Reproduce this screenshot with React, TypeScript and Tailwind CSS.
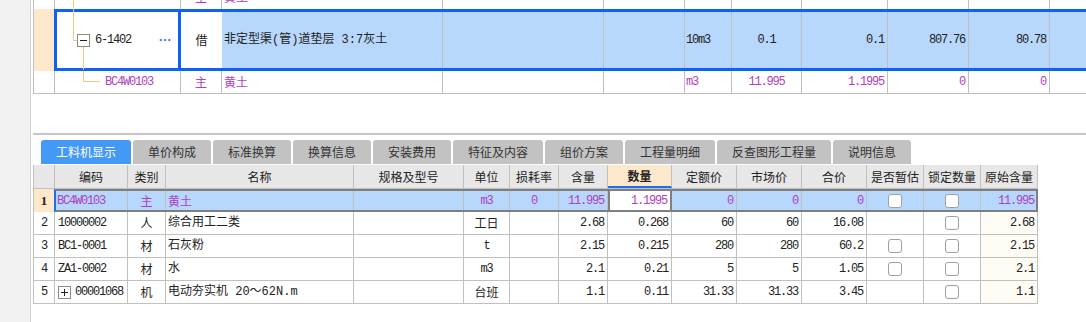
import React from "react";

const MONO = "font-['Liberation_Mono','Noto_Sans_CJK_SC',monospace] text-[12px] tracking-[-1.2px]";
const CJK = "font-['Noto_Sans_CJK_SC',sans-serif] text-[12px]";
const MIX = "font-['Liberation_Mono','Noto_Sans_CJK_SC',monospace] text-[12px]";

const PURPLE = "text-[#b040c0]";

type Row = {
	no: string;
	code: string;
	cat: string;
	name: string;
	unit: string;
	loss: string;
	content: string;
	qty: string;
	dprice: string;
	mprice: string;
	total: string;
	est: boolean;
	orig: string;
	expand?: boolean;
};

const ROWS: Row[] = [
	{ no: "2", code: "10000002", cat: "人", name: "综合用工二类", unit: "工日", loss: "", content: "2.68", qty: "0.268", dprice: "60", mprice: "60", total: "16.08", est: false, orig: "2.68" },
	{ no: "3", code: "BC1-0001", cat: "材", name: "石灰粉", unit: "t", loss: "", content: "2.15", qty: "0.215", dprice: "280", mprice: "280", total: "60.2", est: true, orig: "2.15" },
	{ no: "4", code: "ZA1-0002", cat: "材", name: "水", unit: "m3", loss: "", content: "2.1", qty: "0.21", dprice: "5", mprice: "5", total: "1.05", est: true, orig: "2.1" },
	{ no: "5", code: "00001068", cat: "机", name: "电动夯实机 20～62N.m", unit: "台班", loss: "", content: "1.1", qty: "0.11", dprice: "31.33", mprice: "31.33", total: "3.45", est: false, orig: "1.1", expand: true },
];

const TABS = [
	{ label: "工料机显示", w: "w-[90px]" },
	{ label: "单价构成", w: "w-[78px]" },
	{ label: "标准换算", w: "w-[78px]" },
	{ label: "换算信息", w: "w-[78px]" },
	{ label: "安装费用", w: "w-[78px]" },
	{ label: "特征及内容", w: "w-[90px]" },
	{ label: "组价方案", w: "w-[78px]" },
	{ label: "工程量明细", w: "w-[90px]" },
	{ label: "反查图形工程量", w: "w-[114px]" },
	{ label: "说明信息", w: "w-[78px]" },
];

const HEAD = [
	{ label: "编码", w: "w-[73px]" },
	{ label: "类别", w: "w-[38px]" },
	{ label: "名称", w: "w-[188px]" },
	{ label: "规格及型号", w: "w-[110px]" },
	{ label: "单位", w: "w-[46px]" },
	{ label: "损耗率", w: "w-[49px]" },
	{ label: "含量", w: "w-[49px]" },
	{ label: "数量", w: "w-[64px]" },
	{ label: "定额价", w: "w-[65px]" },
	{ label: "市场价", w: "w-[65px]" },
	{ label: "合价", w: "w-[65px]" },
	{ label: "是否暂估", w: "w-[57px]" },
	{ label: "锁定数量", w: "w-[57px]" },
	{ label: "原始含量", w: "w-[57px]" },
];

function Check() {
	return <span className="block h-[14px] w-[14px] rounded-[3px] border border-[#a0a0a0] bg-white" />;
}

function TreeBox({ sign }: { sign: "-" | "+" }) {
	return (
		<span className="relative flex h-[13px] w-[13px] shrink-0 items-center justify-center border border-[#8a8a8a] bg-white">
			<span className="h-px w-[7px] bg-[#222]" />
			{sign === "+" && <span className="absolute h-[7px] w-px bg-[#222]" />}
		</span>
	);
}

function TopGrid() {
	const line = "border-r border-[#c0c0c0]";
	return (
		<div className="border-l border-[#c0c0c0] text-[#222]">
			{/* previous row, cut off at the top */}
			<div className="h-[9px] overflow-hidden">
				<div className="-mt-[16px] flex h-[25px]">
					<div className={`w-[21px] ${line}`} />
					<div className={`relative flex w-[126px] items-center pl-[50px] ${line} ${MONO} ${PURPLE}`}>
						<span className="absolute left-[18px] top-0 h-full w-px bg-[#f5c48a]" />
						BC4W0103
					</div>
					<div className={`flex w-[41px] items-center justify-center ${line} ${CJK} ${PURPLE}`}>主</div>
					<div className={`flex w-[221px] items-center pl-[2px] ${line} ${CJK} ${PURPLE}`}>黄土</div>
					<div className={`w-[161px] ${line}`} />
					<div className={`w-[81px] ${line}`} />
					<div className={`flex w-[47px] items-center pl-[1px] ${line} ${MONO} ${PURPLE}`}>m3</div>
					<div className={`flex w-[70px] items-center justify-center ${line} ${MONO} ${PURPLE}`}>11.995</div>
					<div className={`flex w-[86px] items-center justify-end pr-[3px] ${line} ${MONO} ${PURPLE}`}>1.1995</div>
					<div className={`flex w-[81px] items-center justify-end pr-[3px] ${line} ${MONO} ${PURPLE}`}>0</div>
					<div className={`flex w-[81px] items-center justify-end pr-[3px] ${line} ${MONO} ${PURPLE}`}>0</div>
					<div className="flex-1" />
				</div>
			</div>

			{/* selected row */}
			<div className="flex h-[62px]">
				<div className="w-[20px] bg-[#fde8cc]" />
				<div className="flex flex-1 border-y-[3px] border-[#0b63f6]">
					<div className="relative flex w-[127px] items-center border-x-[3px] border-[#0b63f6] bg-white pl-[20px] pr-[6px]">
						<span className="absolute left-[16px] -top-[3px] h-[31px] w-px bg-[#f5c48a]" />
						<span className="absolute left-[16px] top-[28px] h-px w-[4px] bg-[#f5c48a]" />
						<span className="absolute left-[26px] top-[34px] h-[24px] w-px bg-[#f5c48a]" />
						<TreeBox sign="-" />
						<span className={`ml-[5px] ${MONO}`}>6-1402</span>
						<span className="ml-auto text-[12px] font-bold tracking-[1px] text-[#2f6fc9]">···</span>
					</div>
					<div className={`flex w-[41px] items-center justify-center bg-white ${CJK}`}>借</div>
					<div className={`flex w-[221px] items-center bg-[#b7d7fc] pl-[2px] ${line} ${MIX}`}>非定型渠(管)道垫层 3:7灰土</div>
					<div className={`w-[161px] bg-[#b7d7fc] ${line}`} />
					<div className={`w-[81px] bg-[#b7d7fc] ${line}`} />
					<div className={`flex w-[47px] items-center bg-[#b7d7fc] pl-[1px] ${line} ${MONO}`}>10m3</div>
					<div className={`flex w-[70px] items-center justify-center bg-[#b7d7fc] ${line} ${MONO}`}>0.1</div>
					<div className={`flex w-[86px] items-center justify-end bg-[#b7d7fc] pr-[3px] ${line} ${MONO}`}>0.1</div>
					<div className={`flex w-[81px] items-center justify-end bg-[#b7d7fc] pr-[3px] ${line} ${MONO}`}>807.76</div>
					<div className={`flex w-[81px] items-center justify-end bg-[#b7d7fc] pr-[3px] ${line} ${MONO}`}>80.78</div>
					<div className="flex-1 bg-[#b7d7fc]" />
				</div>
			</div>

			{/* child row */}
			<div className="flex h-[23px] border-b border-[#c0c0c0]">
				<div className={`w-[21px] ${line}`} />
				<div className={`relative flex w-[126px] items-center pl-[50px] ${line} ${MONO} ${PURPLE}`}>
					<span className="absolute left-[28px] top-0 h-[11px] w-px bg-[#f5c48a]" />
					<span className="absolute left-[28px] top-[10px] h-px w-[17px] bg-[#f5c48a]" />
					BC4W0103
				</div>
				<div className={`flex w-[41px] items-center justify-center ${line} ${CJK} ${PURPLE}`}>主</div>
				<div className={`flex w-[221px] items-center pl-[2px] ${line} ${CJK} ${PURPLE}`}>黄土</div>
				<div className={`w-[161px] ${line}`} />
				<div className={`w-[81px] ${line}`} />
				<div className={`flex w-[47px] items-center pl-[1px] ${line} ${MONO} ${PURPLE}`}>m3</div>
				<div className={`flex w-[70px] items-center justify-center ${line} ${MONO} ${PURPLE}`}>11.995</div>
				<div className={`flex w-[86px] items-center justify-end pr-[3px] ${line} ${MONO} ${PURPLE}`}>1.1995</div>
				<div className={`flex w-[81px] items-center justify-end pr-[3px] ${line} ${MONO} ${PURPLE}`}>0</div>
				<div className={`flex w-[81px] items-center justify-end pr-[3px] ${line} ${MONO} ${PURPLE}`}>0</div>
				<div className="flex-1" />
			</div>
		</div>
	);
}

function Tabs() {
	return (
		<div className="flex h-[24px] gap-[2px] pl-[8px]">
			{TABS.map((t, i) => (
				<div
					key={t.label}
					className={`flex ${t.w} items-center justify-center rounded-t-[3px] ${CJK} ${i === 0 ? "bg-[#4499f6] text-white" : "bg-[#c2c2c2] text-[#333]"}`}
				>
					{t.label}
				</div>
			))}
		</div>
	);
}

function BottomGrid() {
	const line = "border-r border-[#c0c0c0]";
	const num = `flex items-center justify-end pr-[3px] ${line} ${MONO}`;
	return (
		<div className="w-[1005px] border-l border-[#c0c0c0] text-[#222]">
			{/* header */}
			<div className="flex h-[24px] border-b border-[#c0c0c0] bg-[#e7e7e7]">
				<div className={`w-[21px] ${line}`} />
				{HEAD.map((h) => (
					<div
						key={h.label}
						className={`flex ${h.w} items-center justify-center ${line} ${CJK} ${
							h.label === "数量" ? "border-b-2 border-b-[#1a6ef5] bg-[#fde8cc] font-bold" : ""
						}`}
					>
						{h.label}
					</div>
				))}
			</div>

			{/* selected row */}
			<div className="flex h-[23px]">
				<div className="flex w-[20px] items-center justify-center bg-[#fde8cc] font-['Liberation_Serif',serif] text-[13px] font-bold">1</div>
				<div className={`flex flex-1 border-y-2 border-l-2 border-r-2 border-y-[#7f7f7f] border-r-[#7f7f7f] border-l-[#1a6ef5] bg-[#b7d7fc] ${PURPLE}`}>
					<div className={`flex w-[72px] items-center pl-[1px] ${line} ${MONO}`}>BC4W0103</div>
					<div className={`flex w-[38px] items-center justify-center ${line} ${CJK}`}>主</div>
					<div className={`flex w-[188px] items-center pl-[2px] ${line} ${CJK}`}>黄土</div>
					<div className={`w-[110px] ${line}`} />
					<div className={`flex w-[46px] items-center justify-center ${line} ${MONO}`}>m3</div>
					<div className={`flex w-[49px] items-center justify-center ${line} ${MONO}`}>0</div>
					<div className={`w-[49px] ${num}`}>11.995</div>
					<div className={`flex w-[64px] items-center justify-end border-x-2 border-[#7f7f7f] bg-white pr-[3px] ${MONO}`}>1.1995</div>
					<div className={`w-[65px] ${num}`}>0</div>
					<div className={`w-[65px] ${num}`}>0</div>
					<div className={`w-[65px] ${num}`}>0</div>
					<div className={`flex w-[57px] items-center justify-center ${line}`}><Check /></div>
					<div className={`flex w-[57px] items-center justify-center ${line}`}><Check /></div>
					<div className={`flex flex-1 items-center justify-end pr-[2px] ${MONO}`}>11.995</div>
				</div>
			</div>

			{ROWS.map((r) => (
				<div key={r.no} className="flex h-[23px] border-b border-[#c0c0c0]">
					<div className={`flex w-[21px] items-center justify-center ${line} ${MONO}`}>{r.no}</div>
					<div className={`flex w-[73px] items-center pl-[3px] ${line} ${MONO}`}>
						{r.expand && (
							<span className="mr-[4px]">
								<TreeBox sign="+" />
							</span>
						)}
						{r.code}
					</div>
					<div className={`flex w-[38px] items-center justify-center ${line} ${CJK}`}>{r.cat}</div>
					<div className={`flex w-[188px] items-center pl-[2px] ${line} ${MIX}`}>{r.name}</div>
					<div className={`w-[110px] ${line}`} />
					<div className={`flex w-[46px] items-center justify-center ${line} ${/^[a-z0-9]+$/.test(r.unit) ? MONO : CJK}`}>{r.unit}</div>
					<div className={`flex w-[49px] items-center justify-center ${line} ${MONO}`}>{r.loss}</div>
					<div className={`w-[49px] ${num}`}>{r.content}</div>
					<div className={`w-[64px] ${num}`}>{r.qty}</div>
					<div className={`w-[65px] ${num}`}>{r.dprice}</div>
					<div className={`w-[65px] ${num}`}>{r.mprice}</div>
					<div className={`w-[65px] ${num}`}>{r.total}</div>
					<div className={`flex w-[57px] items-center justify-center ${line}`}>{r.est && <Check />}</div>
					<div className={`flex w-[57px] items-center justify-center ${line}`}><Check /></div>
					<div className={`w-[57px] bg-[#fffbf5] ${num}`}>{r.orig}</div>
				</div>
			))}
		</div>
	);
}

export default function App() {
	return (
		<div className="flex h-[322px] w-[1086px] overflow-hidden bg-white">
			<div className="w-[31px] shrink-0 border-r border-[#d2d2d2] bg-[#f2f2f2]" />
			<div className="ml-[2px] flex min-w-0 flex-1 flex-col">
				<TopGrid />
				<div className="h-[39px]" />
				<div className="h-[2px] bg-[#c6c6c6]" />
				<div className="h-[5px]" />
				<Tabs />
				<div className="h-px" />
				<BottomGrid />
			</div>
		</div>
	);
}
